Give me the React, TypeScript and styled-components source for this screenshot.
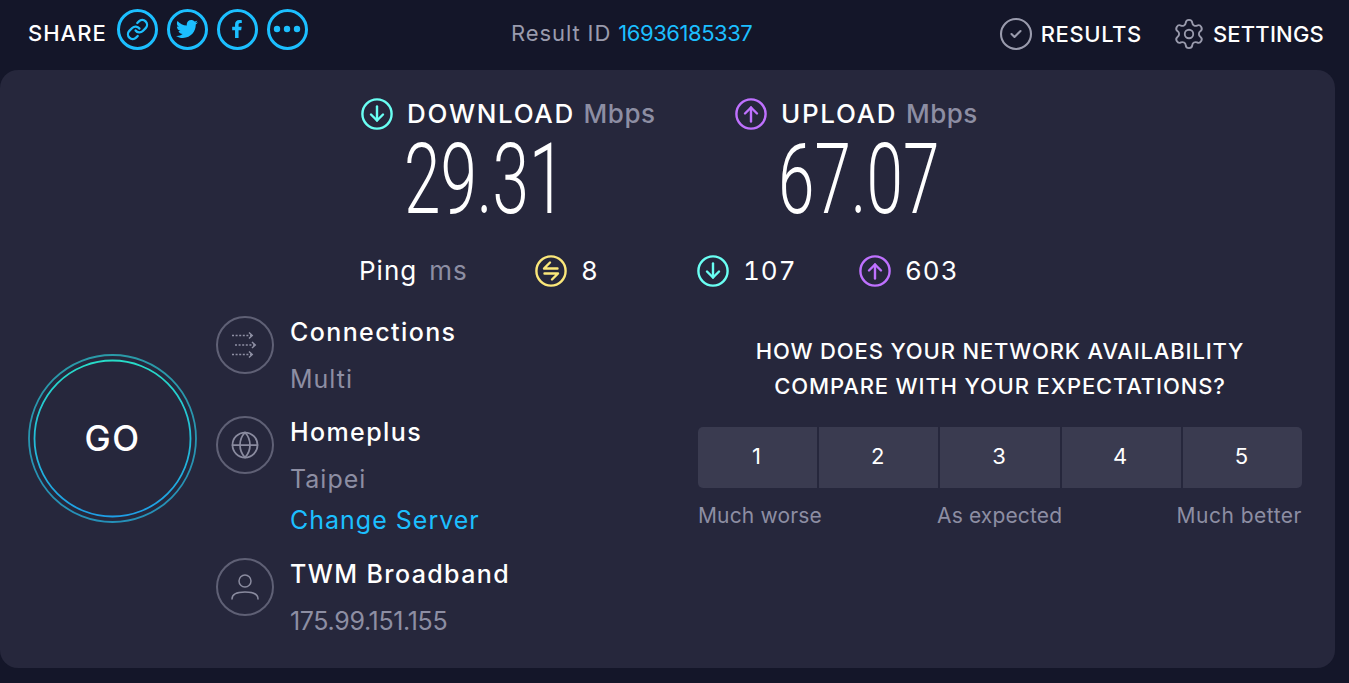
import { CircleCheck, Globe, Link as LinkIcon, Settings } from 'lucide-react';
import { FaFacebookF, FaTwitter } from 'react-icons/fa';
import styled, { createGlobalStyle } from 'styled-components';

const SPEEDS = [
  { label: 'DOWNLOAD', value: '29.31', dir: 'down' },
  { label: 'UPLOAD', value: '67.07', dir: 'up' },
] as const;

const COLORS = { down: '#6afff3', up: '#bf71ff' };

function ArrowBadge({ dir }: { dir: 'down' | 'up' }) {
  return (
    <svg width="32" height="32" viewBox="0 0 32 32" fill="none" stroke={COLORS[dir]} strokeWidth="2.4">
      <circle cx="16" cy="16" r="14.6" />
      <g strokeLinecap="round" strokeLinejoin="round" transform={dir === 'up' ? 'rotate(180 16 16)' : undefined}>
        <path d="M16 8.5v14" />
        <path d="M10 16.5l6 6 6-6" />
      </g>
    </svg>
  );
}

function PingBadge() {
  return (
    <svg width="32" height="32" viewBox="0 0 32 32" fill="none" stroke="#fbe77a" strokeWidth="2.4" strokeLinecap="round" strokeLinejoin="round">
      <circle cx="16" cy="16" r="14.6" />
      <path d="M22.5 13.5H9L15 7.5" />
      <path d="M9.5 18.5H23L17 24.5" />
    </svg>
  );
}

function ConnectionsIcon() {
  return (
    <svg width="30" height="28" viewBox="0 0 30 28" fill="none" stroke="#8f90a4" strokeWidth="1.5">
      <path d="M2 4.5h20M5 14h20M2 23.5h20" strokeDasharray="2 1.6" />
      <path d="M19 1.5l3.2 3-3.2 3M22 11l3.2 3-3.2 3M19 20.5l3.2 3-3.2 3" />
    </svg>
  );
}

function UserIcon() {
  return (
    <svg width="28" height="28" viewBox="0 0 28 28" fill="none" stroke="#8a8b9f" strokeWidth="1.5" strokeLinecap="round">
      <circle cx="14" cy="8" r="6" />
      <path d="M1 26c0-5 5-7 13-7s13 2 13 7" />
    </svg>
  );
}

function DotsIcon() {
  return (
    <svg width="28" height="8" viewBox="0 0 28 8" fill="#1cbfff">
      <circle cx="4" cy="4" r="3.2" />
      <circle cx="14" cy="4" r="3.2" />
      <circle cx="24" cy="4" r="3.2" />
    </svg>
  );
}

function GoRings() {
  return (
    <RingSvg viewBox="0 0 169 169" fill="none">
      <defs>
        <linearGradient id="goInner" x1="0" y1="0" x2="0" y2="1">
          <stop offset="0" stopColor="#27dcc8" />
          <stop offset="1" stopColor="#1e9ee6" />
        </linearGradient>
        <linearGradient id="goOuter" x1="0" y1="0" x2="0" y2="1">
          <stop offset="0" stopColor="#2a9aa8" />
          <stop offset="1" stopColor="#2590b8" />
        </linearGradient>
      </defs>
      <circle cx="84.5" cy="84.5" r="83.5" stroke="url(#goOuter)" strokeWidth="1.8" />
      <circle cx="84.5" cy="84.5" r="78" stroke="url(#goInner)" strokeWidth="1.8" />
    </RingSvg>
  );
}

export default function App() {
  return (
    <>
      <GlobalStyle />
      <Header>
        <ShareGroup>
          <ShareLabel>SHARE</ShareLabel>
          <ShareIcons>
            <ShareCircle>
              <LinkIcon size={23} strokeWidth={2.4} />
            </ShareCircle>
            <ShareCircle>
              <FaTwitter size={22} />
            </ShareCircle>
            <ShareCircle>
              <FaFacebookF size={18} />
            </ShareCircle>
            <ShareCircle>
              <DotsIcon />
            </ShareCircle>
          </ShareIcons>
        </ShareGroup>
        <ResultId>
          Result ID <ResultLink>16936185337</ResultLink>
        </ResultId>
        <Nav>
          <NavItem>
            <CircleCheck size={36} strokeWidth={1.4} color="#9a9bad" />
            RESULTS
          </NavItem>
          <NavItem $tight>
            <Settings size={34} strokeWidth={1.3} color="#9a9bad" />
            SETTINGS
          </NavItem>
        </Nav>
      </Header>
      <Card>
        <SpeedRow>
          {SPEEDS.map((speed) => (
            <SpeedColumn key={speed.label}>
              <SpeedLabel>
                <ArrowBadge dir={speed.dir} />
                <SpeedText>
                  {speed.label} <Unit>Mbps</Unit>
                </SpeedText>
              </SpeedLabel>
              <SpeedValue>{speed.value}</SpeedValue>
            </SpeedColumn>
          ))}
        </SpeedRow>
        <PingRow>
          <PingLabel>
            Ping <PingUnit>ms</PingUnit>
          </PingLabel>
          <PingStat>
            <PingBadge />
            <PingValue>8</PingValue>
          </PingStat>
          <PingStat>
            <ArrowBadge dir="down" />
            <PingValue>107</PingValue>
          </PingStat>
          <PingStat>
            <ArrowBadge dir="up" />
            <PingValue>603</PingValue>
          </PingStat>
        </PingRow>
        <Bottom>
          <GoButton>
            <GoRings />
            GO
          </GoButton>
          <ServerList>
            <ServerRow>
              <ServerIcon>
                <ConnectionsIcon />
              </ServerIcon>
              <ServerText>
                <ServerTitle>Connections</ServerTitle>
                <ServerSub>Multi</ServerSub>
              </ServerText>
            </ServerRow>
            <ServerRow>
              <ServerIcon>
                <Globe size={30} strokeWidth={1.4} />
              </ServerIcon>
              <ServerText>
                <ServerTitle>Homeplus</ServerTitle>
                <ServerSub>Taipei</ServerSub>
                <ChangeServer>Change Server</ChangeServer>
              </ServerText>
            </ServerRow>
            <ServerRow>
              <ServerIcon>
                <UserIcon />
              </ServerIcon>
              <ServerText>
                <ServerTitle>TWM Broadband</ServerTitle>
                <ServerSub $tight>175.99.151.155</ServerSub>
              </ServerText>
            </ServerRow>
          </ServerList>
          <Survey>
            <SurveyTitle>
              HOW DOES YOUR NETWORK AVAILABILITY
              <br />
              COMPARE WITH YOUR EXPECTATIONS?
            </SurveyTitle>
            <ScaleRow>
              {[1, 2, 3, 4, 5].map((n) => (
                <ScaleButton key={n}>{n}</ScaleButton>
              ))}
            </ScaleRow>
            <ScaleLabels>
              <span>Much worse</span>
              <span>As expected</span>
              <RightLabel>Much better</RightLabel>
            </ScaleLabels>
          </Survey>
        </Bottom>
      </Card>
    </>
  );
}

const GlobalStyle = createGlobalStyle`
  body {
    margin: 0;
    background: #141629;
    color: #fff;
    font-family: Inter, 'Liberation Sans', sans-serif;
  }
`;

const Header = styled.header`
  display: flex;
  align-items: center;

  height: 66px;
  margin-bottom: 4px;
  padding: 0 25px 0 28px;
`;

const ShareGroup = styled.div`
  display: flex;
  align-items: center;
  gap: 10px;

  width: 483px;
`;

const ShareLabel = styled.span`
  font-size: 22px;
  font-weight: 500;
  letter-spacing: 1px;
`;

const ShareIcons = styled.div`
  display: flex;
  gap: 9px;

  margin-bottom: 8px;
`;

const ShareCircle = styled.div`
  display: flex;
  justify-content: center;
  align-items: center;

  width: 41px;
  height: 41px;
  border: 3px solid #1cbfff;
  border-radius: 50%;

  box-sizing: border-box;
  color: #1cbfff;
`;

const ResultId = styled.div`
  color: #9a9bad;
  font-size: 22px;
  letter-spacing: 0.9px;
`;

const ResultLink = styled.span`
  color: #1cbfff;
  letter-spacing: -0.45px;
`;

const Nav = styled.nav`
  display: flex;
  gap: 30px;

  margin-top: 1px;
  margin-left: auto;
`;

const NavItem = styled.div<{ $tight?: boolean }>`
  display: flex;
  align-items: center;
  gap: 7px;

  font-size: 22px;
  font-weight: 500;
  letter-spacing: ${({ $tight }) => ($tight ? '0.2px' : '0.6px')};
`;

const Card = styled.main`
  width: 1335px;
  height: 598px;
  padding: 28px 33px 31px 28px;
  border-radius: 18px;

  background: #26273c;
  box-sizing: border-box;
`;

const SpeedRow = styled.div`
  display: flex;

  padding-left: 333px;
`;

const SpeedColumn = styled.section`
  width: 374px;
`;

const SpeedLabel = styled.div`
  display: flex;
  align-items: center;
  gap: 14px;

  height: 32px;

  font-size: 26px;
  font-weight: 500;
  letter-spacing: 1.7px;
  white-space: nowrap;
`;

const SpeedText = styled.span`
  margin-bottom: 2px;
`;

const Unit = styled.span`
  color: #8d8ea3;
  letter-spacing: 0.5px;
`;

const SpeedValue = styled.div`
  height: 95px;
  margin-left: 43px;

  font-family: Roboto, sans-serif;
  font-size: 98px;
  font-weight: 300;
  line-height: 100px;

  transform: scaleX(0.67);
  transform-origin: left center;
`;

const PingRow = styled.div`
  display: flex;
  align-items: center;

  height: 32px;
  margin-top: 30px;
  padding-left: 331px;

  font-size: 26px;
  font-variant-numeric: tabular-nums;
  letter-spacing: 1px;
`;

const PingLabel = styled.div`
  width: 176px;
  margin-bottom: 2px;
`;

const PingUnit = styled.span`
  margin-left: 4px;

  color: #8d8ea3;
`;

const PingStat = styled.div`
  display: flex;
  align-items: center;
  gap: 14px;

  width: 162px;
`;

const PingValue = styled.span`
  margin-bottom: 2px;
`;

const Bottom = styled.div`
  display: flex;
  align-items: flex-start;

  margin-top: 29px;
`;

const GoButton = styled.button`
  position: relative;

  flex: none;
  width: 169px;
  height: 169px;
  margin: 38px 19px 0 0;
  padding: 0 0 2px;
  border: none;
  border-radius: 50%;

  background: none;
  color: #fff;
  font-family: inherit;
  font-size: 35px;
  font-weight: 500;
  letter-spacing: 1.5px;
`;

const RingSvg = styled.svg`
  position: absolute;
  top: 0;
  left: 0;

  width: 169px;
  height: 169px;
`;

const ServerList = styled.div`
  display: flex;
  flex-direction: column;
  gap: 21px;

  width: 482px;
`;

const ServerRow = styled.div`
  display: flex;
  gap: 16px;
`;

const ServerIcon = styled.div`
  display: flex;
  justify-content: center;
  align-items: center;

  flex: none;
  width: 58px;
  height: 58px;
  border: 2px solid #5f6075;
  border-radius: 50%;

  box-sizing: border-box;
  color: #8a8b9f;
`;

const ServerText = styled.div`
  display: flex;
  flex-direction: column;
`;

const ServerTitle = styled.div`
  height: 32px;

  font-size: 25px;
  font-weight: 500;
  line-height: 32px;
  letter-spacing: 1.4px;
`;

const ServerSub = styled.div<{ $tight?: boolean }>`
  height: 32px;
  margin-top: 15px;

  color: #8d8ea3;
  font-size: 25px;
  line-height: 32px;
  letter-spacing: ${({ $tight }) => ($tight ? '-0.35px' : '1px')};
`;

const ChangeServer = styled.a`
  height: 33px;
  margin-top: 9px;

  color: #1cbfff;
  font-size: 25px;
  line-height: 32px;
  letter-spacing: 1px;
`;

const Survey = styled.div`
  flex: 1;

  padding-top: 18px;
`;

const SurveyTitle = styled.h2`
  margin: 0 0 23px;

  font-size: 22px;
  font-weight: 500;
  line-height: 35px;
  letter-spacing: 0.85px;
  text-align: center;
`;

const ScaleRow = styled.div`
  display: grid;
  grid-template-columns: repeat(5, 1fr);
  gap: 2px;

  overflow: hidden;
  border-radius: 5px;
`;

const ScaleButton = styled.button`
  height: 61px;
  padding: 0 2px 4px 0;
  border: none;

  background: #3a3b50;
  color: #fff;
  font-family: inherit;
  font-size: 22px;
`;

const ScaleLabels = styled.div`
  display: grid;
  grid-template-columns: 239px auto 1fr;

  margin-top: 14px;

  color: #8d8ea3;
  font-size: 21px;
  line-height: 28px;
  letter-spacing: 0.15px;
`;

const RightLabel = styled.span`
  letter-spacing: 0.5px;
  text-align: right;
`;
